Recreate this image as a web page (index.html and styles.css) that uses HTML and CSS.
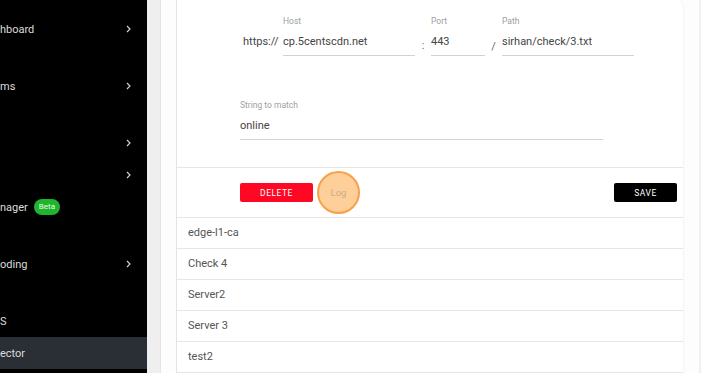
FILE: index.html
```html
<html><head>
  <meta charset="UTF-8">
  <meta name="viewport" content="width=device-width, initial-scale=1.0">
  <title>HTTP Check Editor</title>
  <link rel="stylesheet" href="styles.css">
</head>
<body>
  <div class="container">
    <div class="sidebar">
      <div class="nav-item"><span>hboard</span><svg class="chev" viewBox="0 0 5 8"><path d="M1 1l3 3-3 3"/></svg></div>
      <div class="nav-item spaced"><span>ms</span><svg class="chev" viewBox="0 0 5 8"><path d="M1 1l3 3-3 3"/></svg></div>
      <div class="nav-item spaced"><span></span><svg class="chev" viewBox="0 0 5 8"><path d="M1 1l3 3-3 3"/></svg></div>
      <div class="nav-item"><span></span><svg class="chev" viewBox="0 0 5 8"><path d="M1 1l3 3-3 3"/></svg></div>
      <div class="nav-item"><span>nager</span><span class="badge">Beta</span></div>
      <div class="nav-item spaced"><span>oding</span><svg class="chev" viewBox="0 0 5 8"><path d="M1 1l3 3-3 3"/></svg></div>
      <div class="nav-item spaced"><span>S</span></div>
      <div class="nav-item active"><span>ector</span></div>
    </div>
    <div class="gutter"></div>
    <div class="main-content">
      <div class="card">
        <div class="check-form">
          <div class="url-row">
            <span class="prefix">https://</span>
            <div class="field host">
              <label>Host</label>
              <div class="value">cp.5centscdn.net</div>
            </div>
            <span class="sep">:</span>
            <div class="field port">
              <label>Port</label>
              <div class="value">443</div>
            </div>
            <span class="sep slash">/</span>
            <div class="field path">
              <label>Path</label>
              <div class="value">sirhan/check/3.txt</div>
            </div>
          </div>
          <div class="field match">
            <label>String to match</label>
            <div class="value">online</div>
          </div>
        </div>
        <div class="form-actions">
          <button class="btn delete-btn">DELETE</button>
          <button class="log-btn">Log</button>
          <button class="btn save-btn">SAVE</button>
        </div>
        <div class="check-list">
          <div class="check-row">edge-l1-ca</div>
          <div class="check-row">Check 4</div>
          <div class="check-row">Server2</div>
          <div class="check-row">Server 3</div>
          <div class="check-row">test2</div>
        </div>
      </div>
    </div>
  </div>
</body>
</html>
```

FILE: styles.css
```css
body {
  margin: 0;
  padding: 0;
  font-family: Roboto, Arial, sans-serif;
  background-color: #fdfdfd;
  overflow: hidden;
}

.container {
  display: flex;
  height: 373px;
}

.sidebar {
  width: 147px;
  flex-shrink: 0;
  background-color: #000;
  color: #dcdcdc;
  padding-top: 13px;
  box-sizing: border-box;
  font-size: 11px;
}

.nav-item {
  display: flex;
  align-items: center;
  height: 32px;
  padding-right: 16px;
}

.nav-item.spaced {
  margin-top: 25px;
}

.nav-item .chev {
  margin-left: auto;
  width: 5px;
  height: 8px;
  fill: none;
  stroke: #cfcfcf;
  stroke-width: 1.2;
}

.nav-item.active {
  background-color: #2a2e35;
  margin-top: 0;
}

.badge {
  margin-left: 6px;
  background-color: #1fb52f;
  color: #e8ffe0;
  font-size: 8px;
  padding: 0 5px;
  height: 16px;
  line-height: 16px;
  border-radius: 8px;
}

.gutter {
  width: 13px;
  flex-shrink: 0;
  background-color: #efefef;
  border-right: 1px solid #e4e4e4;
}

.main-content {
  flex-grow: 1;
  padding: 0 16px 0 15px;
  border-right: 2px solid #edf1f6;
  background-color: #fdfdfd;
}

.card {
  background-color: white;
  border-left: 1px solid #e3e3e3;
  border-top-right-radius: 7px;
  box-shadow: 1px 0 2px rgba(0,0,0,0.04);
  height: 100%;
}

.check-form {
  padding: 16px 0 27px 63px;
  border-bottom: 1px solid #e6e6e6;
}

.url-row {
  display: flex;
  align-items: flex-end;
  margin-bottom: 44px;
}

.prefix {
  font-size: 11px;
  color: #444;
  width: 40px;
  padding-left: 3px;
  padding-bottom: 7px;
  line-height: 15px;
}

.sep {
  font-size: 11px;
  color: #666;
  width: 16px;
  text-align: center;
  padding-bottom: 4px;
}

.sep.slash {
  width: 17px;
  padding-bottom: 3px;
}

.field label {
  display: block;
  font-size: 8.5px;
  line-height: 10px;
  color: #a0a0a0;
}

.field .value {
  font-size: 11px;
  line-height: 15px;
  color: #444;
  padding: 8px 0 6px;
  border-bottom: 1px solid #d2d2d2;
}

.host, .path {
  width: 132px;
}

.port {
  width: 54px;
}

.match {
  width: 363px;
}

.form-actions {
  display: flex;
  align-items: center;
  height: 49px;
  padding: 0 6px 0 63px;
  border-bottom: 1px solid #e6e6e6;
}

.btn {
  height: 19px;
  border: none;
  border-radius: 2px;
  color: white;
  font-family: Roboto, Arial, sans-serif;
  font-size: 8.5px;
  letter-spacing: 0.5px;
  cursor: pointer;
}

.delete-btn {
  width: 73px;
  background-color: #ff0823;
}

.log-btn {
  width: 43px;
  height: 43px;
  margin-left: 4px;
  border-radius: 50%;
  border: 2px solid #f8a04a;
  background-color: #fecf98;
  color: #c9ac8c;
  font-family: Roboto, Arial, sans-serif;
  font-size: 9.5px;
  padding: 0;
}

.save-btn {
  width: 63px;
  margin-left: auto;
  background-color: #000;
}

.check-row {
  height: 30px;
  line-height: 30px;
  padding-left: 11px;
  font-size: 11px;
  color: #555;
  border-bottom: 1px solid #e6e6e6;
}
```
